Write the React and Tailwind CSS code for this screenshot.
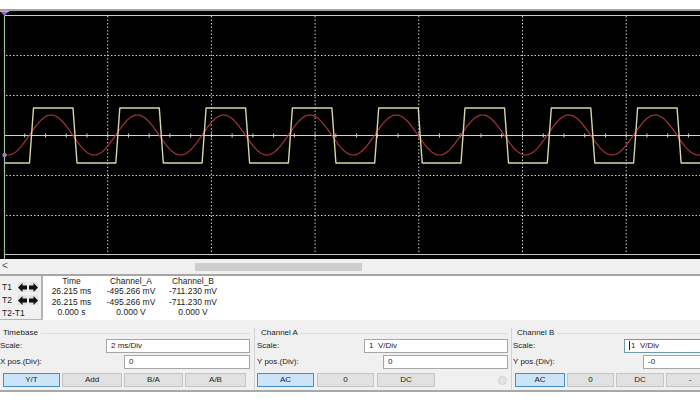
const P = 86.3;
const T0 = 29.5;

function squarePath() {
  let d = "M4 163";
  for (let t = T0; t < 720; t += P) {
    d += ` L${t.toFixed(2)} 163 L${(t + 4).toFixed(2)} 108 L${(t + 43.5).toFixed(2)} 108 L${(t + 47.5).toFixed(2)} 163`;
  }
  return d;
}

function sinePath() {
  const pts = [];
  for (let x = 4; x <= 700; x += 1) {
    const y = 135 - 20 * Math.sin((2 * Math.PI * (x - T0)) / P);
    pts.push(`${x} ${y.toFixed(2)}`);
  }
  return "M" + pts.join(" L");
}

function Scope() {
  const hLines = [55, 95, 175, 215];
  const vLines = [1, 2, 3, 4, 5, 6].map((k) => 4 + 103.7 * k);
  const ticks = [];
  for (let k = 1; k < 34; k++) ticks.push(4 + 20.74 * k);
  return (
    <div className="h-[248px] bg-black">
      <svg width="700" height="248" viewBox="0 11 700 248">
        <line x1="4" y1="15.5" x2="700" y2="15.5" stroke="#c9c9c9" strokeWidth="1" />
        <line x1="4" y1="254.5" x2="700" y2="254.5" stroke="#c9c9c9" strokeWidth="1" />
        {hLines.map((y) => (
          <line key={y} x1="6" y1={y + 0.5} x2="700" y2={y + 0.5} stroke="#cfcfcf" strokeWidth="1" strokeDasharray="1.5 2" />
        ))}
        {vLines.map((x) => (
          <line key={x} x1={x} y1="16" x2={x} y2="254" stroke="#cfcfcf" strokeWidth="1" strokeDasharray="1.5 2" />
        ))}
        <line x1="4" y1="135.5" x2="700" y2="135.5" stroke="#d4d4d4" strokeWidth="1" />
        {ticks.map((x) => (
          <line key={x} x1={x} y1="133.5" x2={x} y2="137.5" stroke="#d4d4d4" strokeWidth="1" />
        ))}
        <path d={sinePath()} fill="none" stroke="#a8323a" strokeWidth="1.2" />
        <path d={squarePath()} fill="none" stroke="#d8d6a6" strokeWidth="1.4" strokeLinejoin="round" />
        <line x1="4.5" y1="11" x2="4.5" y2="259" stroke="#9cc29c" strokeWidth="1.2" />
        <polygon points="0,11 9,11 4.5,16" fill="#9a5ad0" />
        <line x1="0" y1="11.5" x2="9" y2="11.5" stroke="#7fd3e0" strokeWidth="1" />
        <circle cx="4.5" cy="155" r="2.2" fill="#a07ac8" />
      </svg>
    </div>
  );
}

function Arrow({ dir }) {
  return (
    <div className="flex h-[10px] w-[9px] items-center justify-center bg-[#e2e2e2]">
      <svg width="9" height="9" viewBox="0 0 8 8">
        {dir === "left" ? (
          <polygon points="0,4 4,0 4,2.3 8,2.3 8,5.7 4,5.7 4,8" fill="#111" />
        ) : (
          <polygon points="8,4 4,0 4,2.3 0,2.3 0,5.7 4,5.7 4,8" fill="#111" />
        )}
      </svg>
    </div>
  );
}

function Measurements() {
  const rows = [
    ["Time", "Channel_A", "Channel_B"],
    ["26.215 ms", "-495.266 mV", "-711.230 mV"],
    ["26.215 ms", "-495.266 mV", "-711.230 mV"],
    ["0.000 s", "0.000 V", "0.000 V"],
  ];
  return (
    <div className="flex h-[44px] bg-white text-[#1a1a1a]">
      <div className="flex w-[43px] flex-col border-r-2 border-b border-[#b4b4b4] bg-[#f0f0f0] pl-[2px] text-[8.5px] leading-[10px]">
        <div className="mt-[6px] flex h-[10px] items-center">
          <span className="w-[16px]">T1</span>
          <Arrow dir="left" />
          <span className="w-[2px]" />
          <Arrow dir="right" />
        </div>
        <div className="mt-[3px] flex h-[10px] items-center">
          <span className="w-[16px]">T2</span>
          <Arrow dir="left" />
          <span className="w-[2px]" />
          <Arrow dir="right" />
        </div>
        <div className="mt-[3px]">T2-T1</div>
      </div>
      <div className="grid grid-cols-[57px_62px_62px] content-start text-center text-[8.5px] leading-[10.3px]">
        {rows.flat().map((t, i) => (
          <div key={i}>{t}</div>
        ))}
      </div>
    </div>
  );
}

function Btn({ w, label, active }) {
  return (
    <div
      className={[
        "flex h-[14px] items-center justify-center border text-[8px]",
        active ? "border-[#4a8cc8] bg-[#cce4f7]" : "border-[#c4c4c4] bg-[#e1e1e1]",
      ].join(" ")}
      style={{ width: w }}
    >
      {label}
    </div>
  );
}

function Field({ w, value, focus }) {
  return (
    <div
      className={[
        "flex items-center whitespace-pre bg-white pl-[4px] text-[8px]",
        focus ? "border border-[#6f9aa6]" : "border border-[#a6a6a6]",
      ].join(" ")}
      style={{ width: w }}
    >
      {value}
    </div>
  );
}

function GroupHead({ label, indent }) {
  return (
    <div className="flex h-[10px] items-center">
      <span className="shrink-0 text-[8px]" style={{ marginLeft: indent }}>
        {label}
      </span>
      <div className="ml-[3px] h-px flex-1 bg-[#dedede]" />
    </div>
  );
}

function Controls() {
  return (
    <div className="flex h-[70px] bg-[#f0f0f0] pt-[8px] text-[#1a1a1a]">
      <div className="flex w-[254px] shrink-0 flex-col pr-[4px]">
        <GroupHead label="Timebase" indent={3} />
        <div className="flex h-[15px] items-center justify-between">
          <span className="text-[8px]">Scale:</span>
          <Field w={144} value="2 ms/Div" />
        </div>
        <div className="mt-[2px] flex h-[14px] items-center justify-between">
          <span className="text-[8px]">X pos.(Div):</span>
          <Field w={126} value="0" />
        </div>
        <div className="mt-[4px] flex gap-[2px] pl-[3px]">
          <Btn w={57} label="Y/T" active />
          <Btn w={60} label="Add" />
          <Btn w={59} label="B/A" />
          <Btn w={61} label="A/B" />
        </div>
      </div>
      <div className="flex w-[257px] shrink-0 flex-col border-l border-[#d2d2d2] pr-[3px]">
        <GroupHead label="Channel A" indent={6} />
        <div className="flex h-[15px] items-center justify-between pl-[2px]">
          <span className="text-[8px]">Scale:</span>
          <Field w={144} value="1  V/Div" />
        </div>
        <div className="mt-[2px] flex h-[14px] items-center justify-between pl-[2px]">
          <span className="text-[8px]">Y pos.(Div):</span>
          <Field w={125} value="0" />
        </div>
        <div className="mt-[4px] flex items-center gap-[3px] pl-[2px]">
          <Btn w={57} label="AC" active />
          <Btn w={57} label="0" />
          <Btn w={58} label="DC" />
          <div className="ml-[60px] h-[9px] w-[9px] rounded-full border border-[#d0d0d0] bg-[#e4e4e4]" />
        </div>
      </div>
      <div className="flex w-[257px] shrink-0 flex-col border-l border-[#d2d2d2]">
        <GroupHead label="Channel B" indent={5} />
        <div className="flex h-[15px] items-center justify-between pl-[1px]">
          <span className="text-[8px]">Scale:</span>
          <Field w={144} value={<><span className="mr-[1px] inline-block h-[9px] w-px bg-[#222]" />1  V/Div</>} focus />
        </div>
        <div className="mt-[2px] flex h-[14px] items-center justify-between pl-[1px]">
          <span className="text-[8px]">Y pos.(Div):</span>
          <Field w={125} value="-0" />
        </div>
        <div className="mt-[4px] flex gap-[2px] pl-[3px]">
          <Btn w={50} label="AC" active />
          <Btn w={47} label="0" />
          <Btn w={48} label="DC" />
          <Btn w={48} label="-" />
        </div>
      </div>
    </div>
  );
}

export default function App() {
  return (
    <div className="flex h-[408px] w-[700px] flex-col overflow-hidden bg-white font-['Liberation_Sans',sans-serif]">
      <div className="h-[9px] shrink-0 bg-white" />
      <div className="h-[2px] shrink-0 bg-[#a2a2a2]" />
      <Scope />
      <div className="flex h-[15px] shrink-0 items-start bg-[#f0f0f0]">
        <span className="ml-[2px] mt-[1px] text-[10px] leading-[12px] text-[#555]">&lt;</span>
        <div className="ml-[187px] mt-[4px] h-[8px] w-[167px] bg-[#cdcdcd]" />
      </div>
      <div className="h-[2px] shrink-0 bg-[#a6a6a6]" />
      <Measurements />
      <Controls />
      <div className="h-[2px] shrink-0 bg-[#a8a8a8]" />
      <div className="flex-1 bg-white" />
    </div>
  );
}
